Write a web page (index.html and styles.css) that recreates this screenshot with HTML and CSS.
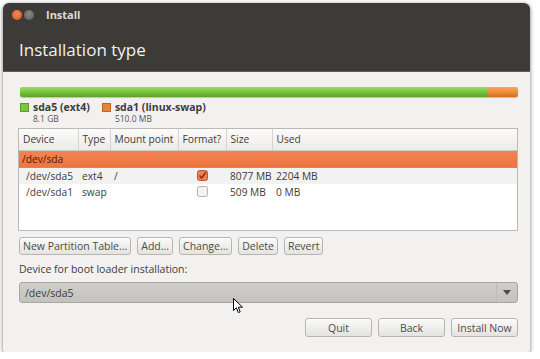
FILE: index.html
```html
<!DOCTYPE html>
<html lang="en">
<head>
    <meta charset="UTF-8">
    <meta name="viewport" content="width=device-width, initial-scale=1.0">
    <title>Install</title>
    <link rel="stylesheet" href="styles.css">
</head>
<body>
    <div class="window">
        <header class="titlebar">
            <div class="titlebar-top">
                <span class="wbtn close"></span>
                <span class="wbtn minimize"></span>
                <span class="wtitle">Install</span>
            </div>
            <h1>Installation type</h1>
        </header>

        <main class="content">
            <div class="diskbar">
                <div class="part ext4" style="flex: 8077"></div>
                <div class="part swap" style="flex: 509"></div>
            </div>

            <div class="legend">
                <div class="legend-item">
                    <span class="swatch green"></span>
                    <div>
                        <div class="lname">sda5 (ext4)</div>
                        <div class="lsize">8.1 GB</div>
                    </div>
                </div>
                <div class="legend-item">
                    <span class="swatch orange"></span>
                    <div>
                        <div class="lname">sda1 (linux-swap)</div>
                        <div class="lsize">510.0 MB</div>
                    </div>
                </div>
            </div>

            <div class="table-wrap">
                <table class="partitions">
                    <thead>
                        <tr>
                            <th class="c-dev">Device</th>
                            <th class="c-type">Type</th>
                            <th class="c-mount">Mount point</th>
                            <th class="c-fmt">Format?</th>
                            <th class="c-size">Size</th>
                            <th>Used</th>
                        </tr>
                    </thead>
                    <tbody>
                        <tr class="selected">
                            <td colspan="6">/dev/sda</td>
                        </tr>
                        <tr class="odd">
                            <td class="child">/dev/sda5</td>
                            <td>ext4</td>
                            <td>/</td>
                            <td class="check">
                                <svg width="11" height="11" viewBox="0 0 11 11">
                                    <rect x="0.5" y="0.5" width="10" height="10" rx="2" fill="#e9825a" stroke="#b9593a"/>
                                    <path d="M2.5 5.5 L4.6 8 L8.8 2.2" fill="none" stroke="#9c2a12" stroke-width="1.6"/>
                                </svg>
                            </td>
                            <td>8077 MB</td>
                            <td>2204 MB</td>
                        </tr>
                        <tr>
                            <td class="child">/dev/sda1</td>
                            <td>swap</td>
                            <td></td>
                            <td class="check">
                                <svg width="11" height="11" viewBox="0 0 11 11">
                                    <rect x="0.5" y="0.5" width="10" height="10" rx="2" fill="#f3f3f2" stroke="#b4b2ae"/>
                                </svg>
                            </td>
                            <td>509 MB</td>
                            <td>0 MB</td>
                        </tr>
                    </tbody>
                </table>
            </div>

            <div class="actions">
                <button class="btn">New Partition Table...</button>
                <button class="btn">Add...</button>
                <button class="btn">Change...</button>
                <button class="btn">Delete</button>
                <button class="btn">Revert</button>
            </div>

            <label class="boot-label">Device for boot loader installation:</label>
            <div class="combo">
                <span>/dev/sda5</span>
                <span class="combo-arrow">
                    <svg width="8" height="5" viewBox="0 0 8 5"><path d="M0 0 H8 L4 5 Z" fill="#4a4a48"/></svg>
                </span>
            </div>

            <div class="footer">
                <button class="btn wide">Quit</button>
                <button class="btn wide">Back</button>
                <button class="btn wide">Install Now</button>
            </div>
        </main>

        <svg class="pointer" width="11" height="16" viewBox="0 0 11 16">
            <path d="M0.5 0.5 L0.5 12.5 L3.4 9.8 L5.4 14.6 L7.2 13.8 L5.3 9.2 L9.5 9.2 Z" fill="#fff" stroke="#000" stroke-width="1" stroke-linejoin="round"/>
        </svg>
    </div>
</body>
</html>
```

FILE: styles.css
```css
body {
    margin: 0;
    background: #fff;
    font-family: "Open Sans", "DejaVu Sans", sans-serif;
    font-size: 10.5px;
    color: #3c3c3c;
}
.window {
    position: relative;
    margin: 3px 0 0 3px;
    width: 527px;
    height: 349px;
    border-radius: 6px 6px 2px 2px;
    overflow: hidden;
    background: #f2f1f0;
    box-shadow: 0 1px 4px rgba(0, 0, 0, 0.55);
    display: flex;
    flex-direction: column;
}
.titlebar {
    height: 68px;
    background: #3c3b37;
    box-sizing: border-box;
    padding: 6px 0 0 9px;
}
.titlebar-top {
    display: flex;
    align-items: center;
    height: 11px;
}
.wbtn {
    width: 10px;
    height: 10px;
    border-radius: 50%;
    margin-right: 2px;
}
.close {
    background: radial-gradient(circle at 50% 40%, #f68a5b, #d9511e);
}
.minimize {
    background: radial-gradient(circle at 50% 40%, #8a8884, #5d5b56);
}
.wtitle {
    margin-left: 10px;
    color: #dfdbd2;
    font-weight: bold;
    font-size: 11px;
}
h1 {
    margin: 20px 0 0 7px;
    font-weight: normal;
    font-size: 17px;
    color: #f2f1f0;
    line-height: 20px;
}
.content {
    flex: 1;
    padding: 15px 12px 0 16px;
    border-top: 1px solid #5f5d57;
}
.diskbar {
    display: flex;
    height: 10px;
    margin: 0 0 0 1px;
    border-radius: 2px;
    overflow: hidden;
    box-shadow: 0 1px 1px rgba(0, 0, 0, 0.2);
}
.part.ext4 {
    background: linear-gradient(#9bdc5f, #74c23a 55%, #5e9f2c);
}
.part.swap {
    background: linear-gradient(#f7a661, #ee8a34 55%, #cf6e1e);
}
.legend {
    display: flex;
    gap: 12px;
    margin: 4px 0 0 1px;
}
.legend-item {
    display: flex;
    align-items: flex-start;
    gap: 4px;
}
.swatch {
    width: 7px;
    height: 7px;
    margin-top: 2px;
    border: 1px solid;
}
.swatch.green {
    background: #7fc544;
    border-color: #5b9a2c;
}
.swatch.orange {
    background: #ea8333;
    border-color: #c0661f;
}
.lname {
    font-weight: bold;
    font-size: 10.5px;
    line-height: 12px;
}
.lsize {
    font-size: 8.5px;
    line-height: 11px;
    color: #555;
}
.table-wrap {
    margin: 4px 0 0 -1px;
    height: 103px;
    box-sizing: border-box;
    border: 1px solid #bcbab5;
    background: #fff;
}
.partitions {
    width: 100%;
    border-collapse: collapse;
    table-layout: fixed;
    font-size: 10.2px;
}
.partitions th {
    box-sizing: border-box;
    height: 21px;
    padding: 0 4px;
    text-align: left;
    font-weight: normal;
    white-space: nowrap;
    background: linear-gradient(#fbfbfa, #ecebe9);
    border-right: 1px solid #d6d4cf;
    border-bottom: 1px solid #cfcdc8;
}
.partitions th:last-child {
    border-right: none;
}
.c-dev { width: 59px; }
.c-type { width: 32px; }
.c-mount { width: 68px; }
.c-fmt { width: 48px; }
.c-size { width: 46px; }
.partitions td {
    height: 16px;
    padding: 0 4px;
    white-space: nowrap;
}
.partitions .selected td {
    height: 17px;
    background: linear-gradient(#f38452, #ed7441);
    color: #4a1c08;
    padding-left: 3px;
}
.partitions .odd td {
    background: #f2f2f1;
}
.partitions td.child {
    padding-left: 7px;
}
.partitions td.check {
    text-align: center;
    padding: 0;
    line-height: 0;
}
.actions {
    display: flex;
    gap: 6px;
    margin-top: 6px;
}
.btn {
    font-family: inherit;
    font-size: 10.5px;
    color: #4c4c4a;
    height: 18px;
    padding: 0 3px;
    border: 1px solid #b7b5b0;
    border-radius: 3px;
    background: linear-gradient(#fafaf9, #e4e3e0);
    box-shadow: inset 0 1px 0 #fff;
}
.boot-label {
    display: block;
    margin-top: 8px;
    line-height: 13px;
}
.combo {
    display: flex;
    align-items: center;
    justify-content: space-between;
    margin-top: 6px;
    height: 21px;
    box-sizing: border-box;
    padding-left: 5px;
    border: 1px solid #a9a7a2;
    border-radius: 3px;
    background: linear-gradient(#cfcecb, #c3c2bf);
}
.combo-arrow {
    display: flex;
    align-items: center;
    height: 100%;
    padding: 0 6px;
    border-left: 1px solid #bdbbb7;
}
.footer {
    display: flex;
    justify-content: flex-end;
    gap: 6px;
    margin-top: 15px;
}
.btn.wide {
    width: 67px;
    height: 19px;
}
.pointer {
    position: absolute;
    left: 230px;
    top: 295px;
}
```
